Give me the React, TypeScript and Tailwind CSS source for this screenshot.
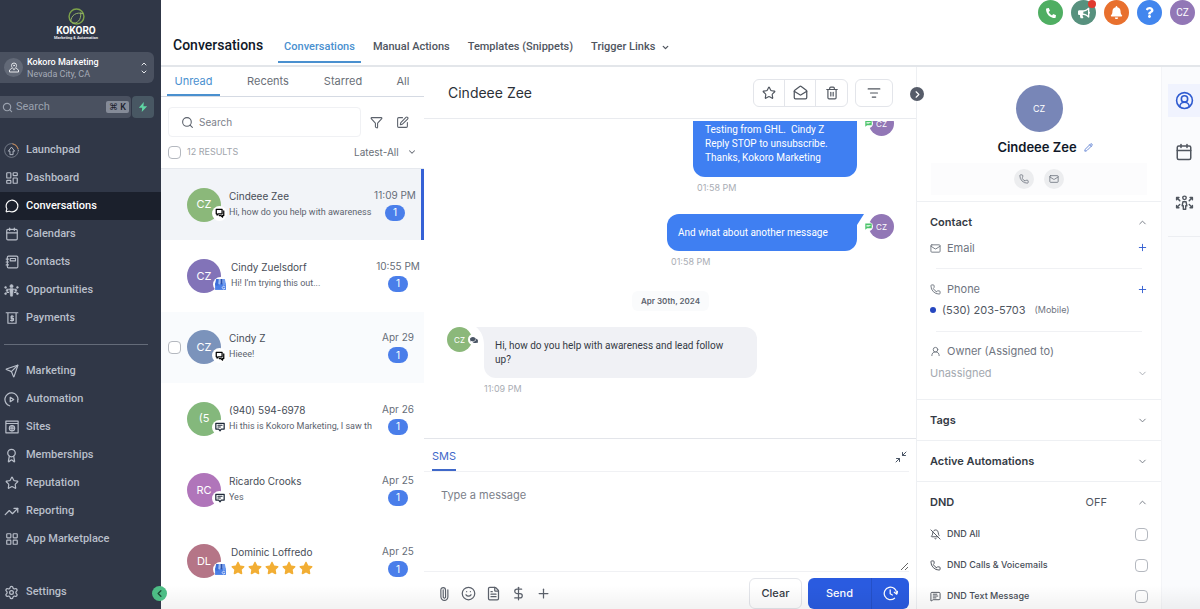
import type { ReactNode } from "react";
import {
  Award,
  BellOff,
  Calendar,
  ChevronDown,
  ChevronLeft,
  ChevronRight,
  ChevronUp,
  CircleUserRound,
  DollarSign,
  FileText,
  Funnel,
  LayoutDashboard,
  LayoutGrid,
  ListFilter,
  Mail,
  MailOpen,
  MessageCircle,
  MessageSquareText,
  Paperclip,
  Pencil,
  Phone,
  Plus,
  Search,
  Send,
  Settings,
  Smile,
  SquarePen,
  Star,
  Trash2,
  TrendingUp,
  UserRound,
} from "lucide-react";
import { FaBell, FaBullhorn, FaComments, FaPhoneAlt, FaQuestion, FaStar } from "react-icons/fa";

const stroke = {
  fill: "none",
  stroke: "currentColor",
  strokeWidth: 2,
  strokeLinecap: "round",
  strokeLinejoin: "round",
} as const;

function LaunchpadIcon() {
  return (
    <svg viewBox="0 0 24 24" className="size-[15px]" {...stroke} strokeWidth={1.5}>
      <circle cx="12" cy="12" r="11" opacity="0.5" />
      <path d="M14 1.2A11 11 0 0 1 22.6 9" stroke="#d08a4e" />
      <path d="M9.500 18v-5H7L12 6.500l5 6.500h-2.500v5z" />
    </svg>
  );
}

function ContactsIcon() {
  return (
    <svg viewBox="0 0 24 24" className="size-[14px]" {...stroke}>
      <rect x="4" y="2" width="18" height="20" rx="2" />
      <rect x="9" y="6" width="9" height="4" />
      <path d="M2 7h4M2 12h4M2 17h4" />
    </svg>
  );
}

function OpportunitiesIcon() {
  return (
    <svg viewBox="0 0 24 24" className="size-[15px]" fill="currentColor" stroke="currentColor">
      <circle cx="12" cy="5" r="2.500" />
      <path d="M9.500 9h5v5l-1 7h-3l-1-7z" />
      <path d="M4 10h16M4 15h4M16 15h4" strokeWidth="1.800" />
      <circle cx="2.500" cy="7" r="1.500" />
      <circle cx="21.500" cy="7" r="1.500" />
      <circle cx="5" cy="12" r="1.500" />
      <circle cx="19" cy="12" r="1.500" />
      <circle cx="2.500" cy="17" r="1.500" />
      <circle cx="21.500" cy="17" r="1.500" />
    </svg>
  );
}

function PaymentsIcon() {
  return (
    <svg viewBox="0 0 24 24" className="size-[14px]" {...stroke}>
      <path d="M2 3h20M5 3v18h14V3" />
      <path d="M14.500 9h-4v3.500h4V16h-5M12 7.500v10" />
    </svg>
  );
}

function AutomationIcon() {
  return (
    <svg viewBox="0 0 24 24" className="size-[15px]" {...stroke}>
      <path d="M22.500 12A10.500 10.500 0 1 0 9 22M22 16v-4" />
      <path d="M10 8.500v7l5.500-3.500z" />
    </svg>
  );
}

function SitesIcon() {
  return (
    <svg viewBox="0 0 24 24" className="size-[14px]" {...stroke}>
      <path d="M1.500 2h21v20h-21zM1.500 6h21" />
      <circle cx="12" cy="14" r="4.500" />
      <path d="M7.500 14h9M12 9.500v9" />
    </svg>
  );
}

function PersonArrowsIcon() {
  return (
    <svg viewBox="0 0 24 20" className="h-4 w-[19px]" {...stroke} strokeWidth={1.800}>
      <circle cx="12" cy="3.500" r="2.200" />
      <path d="M10 8.500h4l1 5h-1.500V18h-3v-4.500H9z" />
      <path d="M2 6V3h3M2 3l4 4M22 6V3h-3M22 3l-4 4M2 13v3h3M2 16l4-4M22 13v3h-3M22 16l-4-4" />
    </svg>
  );
}

function ScheduleIcon() {
  return (
    <svg viewBox="0 0 24 24" className="size-[15px]" {...stroke}>
      <path d="M18.500 19.500A10 10 0 1 1 22 12" />
      <path d="M11.500 6v6.500l3.500 2M18 10l4 3 1.500-4.500" />
    </svg>
  );
}

function CollapseIcon() {
  return (
    <svg viewBox="0 0 24 24" className="size-3" {...stroke}>
      <path d="M22 2l-7 7M15 3v6h6M2 22l7-7M9 21v-6H3" />
    </svg>
  );
}

function ChatBubblesIcon() {
  return (
    <svg viewBox="0 0 24 24" className="size-[10px] text-black" {...stroke} strokeWidth={3}>
      <path d="M3 3h14v11H8l-3 3v-3H3z" />
      <path d="M21 7v11h-3v4l-4-4h-4" />
    </svg>
  );
}

function SmsIcon() {
  return (
    <svg viewBox="0 0 24 24" className="size-[10px] text-gray-800" {...stroke} strokeWidth={3}>
      <path d="M2 3h20v14h-7l-3 4-3-4H2z" />
      <path d="M7 8h10M7 12h6" strokeWidth={2.500} />
    </svg>
  );
}

function StoreIcon() {
  return (
    <svg viewBox="0 0 24 24" className="size-[13px]">
      <path d="M2 10h20v12H2z" fill="#4a7fe6" />
      <path d="M4 2h5v9a3.500 3.500 0 0 1-7 0z" fill="#3b6fd8" />
      <path d="M9 2h3v9a3 3 0 0 1-4 0z" fill="#9dbdf5" />
      <path d="M12 2h4v9a3 3 0 0 1-4 0z" fill="#2850b0" />
      <path d="M16 2h4l2 9a3 3 0 0 1-6 0z" fill="#6f9cf0" />
      <path d="M20 16.500a2.500 2.500 0 1 0 0 2.500h-2" fill="none" stroke="#fff" strokeWidth="1.300" />
    </svg>
  );
}

type NavItem = { label: string; icon: ReactNode; active?: boolean };

const mainNav: NavItem[] = [
  { label: "Launchpad", icon: <LaunchpadIcon /> },
  { label: "Dashboard", icon: <LayoutDashboard size={14} /> },
  { label: "Conversations", icon: <MessageCircle size={14} />, active: true },
  { label: "Calendars", icon: <Calendar size={14} /> },
  { label: "Contacts", icon: <ContactsIcon /> },
  { label: "Opportunities", icon: <OpportunitiesIcon /> },
  { label: "Payments", icon: <PaymentsIcon /> },
];

const toolsNav: NavItem[] = [
  { label: "Marketing", icon: <Send size={14} /> },
  { label: "Automation", icon: <AutomationIcon /> },
  { label: "Sites", icon: <SitesIcon /> },
  { label: "Memberships", icon: <Award size={15} /> },
  { label: "Reputation", icon: <Star size={14} /> },
  { label: "Reporting", icon: <TrendingUp size={15} /> },
  { label: "App Marketplace", icon: <LayoutGrid size={14} /> },
];

const conversations = [
  { name: "Cindeee Zee", initials: "CZ", color: "bg-[#8bb87a]", channel: "chat", text: "Hi, how do you help with awareness", time: "11:09 PM", state: "selected" },
  { name: "Cindy Zuelsdorf", initials: "CZ", color: "bg-[#8273b8]", channel: "google", text: "Hi! I’m trying this out...", time: "10:55 PM", state: "" },
  { name: "Cindy Z", initials: "CZ", color: "bg-[#7b93bb]", channel: "chat", text: "Hieee!", time: "Apr 29", state: "hover" },
  { name: "(940) 594-6978", initials: "(5", color: "bg-[#84b87c]", channel: "sms", text: "Hi this is Kokoro Marketing, I saw th", time: "Apr 26", state: "" },
  { name: "Ricardo Crooks", initials: "RC", color: "bg-[#b075ba]", channel: "sms", text: "Yes", time: "Apr 25", state: "" },
  { name: "Dominic Loffredo", initials: "DL", color: "bg-[#b57587]", channel: "google", text: "", time: "Apr 25", state: "" },
];

function NavLink({ item }: { item: NavItem }) {
  return (
    <a
      href="#"
      className={`flex h-7 items-center gap-[7px] pl-1 text-[11px] font-medium ${
        item.active ? "bg-[#1b202c] text-white" : "text-[#b9bfca]"
      }`}
    >
      <span className="flex w-[15px] justify-center">{item.icon}</span>
      {item.label}
    </a>
  );
}

function Sidebar() {
  return (
    <aside className="relative z-10 flex w-[161px] shrink-0 flex-col bg-[#303747] font-[Roboto,sans-serif]">
      <div className="flex h-[52px] flex-col items-center pt-2 pr-[9px]">
        <svg viewBox="0 0 24 24" className="size-[17px]" fill="none" strokeLinecap="round">
          <circle cx="12" cy="12" r="10.500" stroke="#7da34a" strokeWidth="2" />
          <path d="M4 19C4 10 12 5 21 8M6 21c7 2 13-4 12-14" stroke="#9dbb6a" strokeWidth="1.300" />
        </svg>
        <p className="text-[10px] leading-[11px] font-bold text-white">KOKORO</p>
        <p className="text-[4px] leading-[4px] font-bold text-gray-200">Marketing &amp; Automation</p>
      </div>

      <button className="mr-[7px] flex h-[31px] items-center rounded-r-md bg-[#4a5160] pr-[6px] pl-1 text-left">
        <span className="flex size-[19px] items-center justify-center rounded-full bg-[#626977] text-gray-200">
          <svg viewBox="0 0 24 24" className="size-3" {...stroke}>
            <path d="M12 15c-3-3-5-5-5-8a5 5 0 0 1 10 0c0 3-2 5-5 8z" />
            <circle cx="12" cy="7" r="1" />
            <path d="M7 13l-4 3v4h18v-4l-4-3" />
          </svg>
        </span>
        <span className="ml-1 flex-1 text-[9px] leading-3 font-medium text-white">
          Kokoro Marketing
          <span className="block font-normal text-[#a4aab6]">Nevada City, CA</span>
        </span>
        <span className="flex flex-col text-gray-200">
          <ChevronUp size={8} strokeWidth={3} />
          <ChevronDown size={8} strokeWidth={3} />
        </span>
      </button>

      <div className="mt-[13px] mr-[7px] flex h-[22px] gap-px">
        <label className="flex min-w-0 flex-1 items-center gap-[3px] rounded-r-sm bg-[#4a5160] pr-[2px] pl-[2px] text-[#9aa1ae]">
          <Search size={11} strokeWidth={2.500} className="shrink-0" />
          <input
            aria-label="Search menu"
            placeholder="Search"
            className="min-w-0 flex-1 text-[11px] outline-none placeholder:text-[#9aa1ae]"
          />
          <kbd className="rounded-xs bg-[#858b98] px-[3px] font-[Roboto,'DejaVu_Sans',sans-serif] text-[9px] leading-3 font-medium text-[#1b202c]">
            ⌘ K
          </kbd>
        </label>
        <button aria-label="Quick actions" className="flex w-[22px] items-center justify-center rounded-sm bg-[#485763]">
          <svg viewBox="0 0 24 24" className="size-[10px]" fill="#5fd6a4">
            <path d="M14 0L2 14h8l-1 10 13-14h-9z" />
          </svg>
        </button>
      </div>

      <nav className="mt-[18px] flex-1">
        {mainNav.map((item) => (
          <NavLink key={item.label} item={item} />
        ))}
        <hr className="mt-3 mr-[13px] mb-3 ml-1 border-[#646b79]" />
        {toolsNav.map((item) => (
          <NavLink key={item.label} item={item} />
        ))}
      </nav>
      <div className="pb-[3px]">
        <NavLink item={{ label: "Settings", icon: <Settings size={15} /> }} />
      </div>
      <button
        aria-label="Collapse sidebar"
        className="absolute -right-[6px] bottom-2 flex size-[15px] items-center justify-center rounded-full bg-[#4dbd85] text-[#1d4a35]"
      >
        <ChevronLeft size={11} strokeWidth={3} />
      </button>
    </aside>
  );
}

function Header() {
  const circle = "relative flex size-[25px] items-center justify-center rounded-full text-white";
  const tab = "flex h-[34px] items-center pt-[2px]";
  return (
    <header className="flex h-[67px] shrink-0 items-end justify-between border-b-2 border-[#e3e6ea] font-[Roboto,sans-serif]">
      <div className="flex items-end pb-[2px] pl-3">
        <h1 className="flex h-[36px] items-center text-[14px] font-medium text-gray-900">Conversations</h1>
        <nav className="ml-[15px] flex gap-[18px] text-[11px] font-medium text-[#50565f]">
          <a href="#" className="-mr-[6px] flex h-[34px] items-center border-b-2 border-[#4a90cf] px-[6px] pt-1 text-[#4a90cf]">
            Conversations
          </a>
          <a href="#" className={tab}>Manual Actions</a>
          <a href="#" className={tab}>Templates (Snippets)</a>
          <button className={`${tab} gap-[6px]`}>
            Trigger Links
            <ChevronDown size={9} strokeWidth={3.500} />
          </button>
        </nav>
      </div>
      <div className="flex gap-2 self-start pr-[5px]">
        <button aria-label="Call" className={`${circle} bg-[#4fae62]`}><FaPhoneAlt size={10} /></button>
        <button aria-label="Announcements" className={`${circle} bg-[#57917e]`}>
          <FaBullhorn size={12} />
          <span className="absolute top-0 right-0 size-[8px] rounded-full bg-[#e03a2f]" />
        </button>
        <button aria-label="Notifications" className={`${circle} bg-[#e8702e]`}><FaBell size={13} /></button>
        <button aria-label="Help" className={`${circle} bg-[#4286ee]`}><FaQuestion size={11} /></button>
        <button aria-label="Account" className={`${circle} bg-[#9277b6] text-[10px]`}>CZ</button>
      </div>
    </header>
  );
}

function Conversation({ item }: { item: (typeof conversations)[number] }) {
  const selected = item.state === "selected";
  const google = item.channel === "google";
  return (
    <li
      className={`flex min-w-0 items-center pr-1 pl-[7px] ${
        selected ? "border-r-3 border-[#3561d6] bg-[#f2f4f8]" : item.state === "hover" ? "bg-[#f9fbfd]" : ""
      }`}
    >
      <span className="flex w-[19px] shrink-0">
        {item.state === "hover" && <CheckBox label={`Select ${item.name}`} />}
      </span>
      <span className={`relative flex size-[34px] shrink-0 items-center justify-center rounded-full text-[11px] text-white ${item.color}`}>
        {item.initials}
        <span
          className={`absolute top-[18px] flex size-[15px] items-center justify-center rounded-full bg-white ${
            google ? "-right-[7px]" : "-right-[6px]"
          }`}
        >
          {item.channel === "chat" && <ChatBubblesIcon />}
          {item.channel === "sms" && <SmsIcon />}
          {google && <StoreIcon />}
        </span>
      </span>
      <div className={`min-w-0 flex-1 pb-[2px] ${google ? "pl-[10px]" : "pl-2"}`}>
        <p className="text-[10px] leading-4 text-[#474d57]">{item.name}</p>
        {item.text ? (
          <p className="overflow-hidden font-[Roboto,sans-serif] text-[9px] leading-4 whitespace-nowrap text-[#5c636e]">
            {item.text}
          </p>
        ) : (
          <p className="flex h-4 items-center gap-[3px] text-[#f2ae34]" aria-label="5 stars">
            {[1, 2, 3, 4, 5].map((n) => (
              <FaStar key={n} size={14} />
            ))}
          </p>
        )}
      </div>
      <div className="flex w-[44px] shrink-0 flex-col items-center gap-[2px] pb-[2px]">
        <time className="text-[10px] leading-4 whitespace-nowrap text-[#666d78]">{item.time}</time>
        <span className="flex h-4 w-5 items-center justify-center rounded-full bg-[#4a7eea] text-[10px] text-white">1</span>
      </div>
    </li>
  );
}

function CheckBox({ label }: { label: string }) {
  return (
    <input
      type="checkbox"
      aria-label={label}
      className="size-[13px] shrink-0 appearance-none rounded-[4px] border border-[#b4b8bf] bg-white"
    />
  );
}

function ConversationList() {
  const tab = "flex shrink-0 items-center justify-center";
  return (
    <section className="flex w-[263px] shrink-0 flex-col overflow-hidden">
      <nav className="flex h-[30px] shrink-0 border-b border-[#d5dae3] pl-[6px] text-[11px] text-[#6a6f78]">
        <a href="#" className={`${tab} w-[53px] border-b-2 border-[#4a90cf] pt-[2px] text-[#4a90cf]`}>Unread</a>
        <a href="#" className={`${tab} w-24`}>Recents</a>
        <a href="#" className={`${tab} w-[54px]`}>Starred</a>
        <a href="#" className={`${tab} w-[54px] pl-3`}>All</a>
      </nav>

      <div className="flex items-center pt-[10px] pl-[7px] text-[#5c626c]">
        <label className="flex h-[30px] w-[193px] items-center gap-[5px] rounded-sm border border-[#f0f1f4] pl-3">
          <Search size={13} className="shrink-0" />
          <input
            aria-label="Search conversations"
            placeholder="Search"
            className="min-w-0 flex-1 text-[10px] outline-none placeholder:text-[#7c818a]"
          />
        </label>
        <button aria-label="Filter" className="ml-[9px]"><Funnel size={13} /></button>
        <button aria-label="New conversation" className="ml-[13px]"><SquarePen size={13} /></button>
      </div>

      <div className="mb-px flex h-[30px] items-center justify-between pr-[7px] pl-[7px] text-[9px]">
        <label className="flex items-center gap-[6px] text-[#a0a4ab]">
          <CheckBox label="Select all" />
          12 RESULTS
        </label>
        <span className="flex items-center">
          <select aria-label="Sort" className="appearance-none pr-2 text-[10px] text-[#6a6f78] outline-none">
            <option>Latest-All</option>
          </select>
          <ChevronDown size={10} strokeWidth={2.500} className="text-[#6a6f78]" />
        </span>
      </div>

      <ul className="grid h-[429px] shrink-0 grid-cols-1 grid-rows-6 border-t border-[#e6e9ee]">
        {conversations.map((item) => (
          <Conversation key={item.name} item={item} />
        ))}
      </ul>
    </section>
  );
}

function OutgoingAvatar() {
  return (
    <span className="relative ml-3 flex size-[25px] shrink-0 items-center justify-center rounded-full bg-[#9277b6] text-[8px] text-white">
      CZ
      <span className="absolute top-2 -left-[5px] flex size-[9px] items-center justify-center rounded-full bg-white text-[#4cc46b]">
        <svg viewBox="0 0 24 24" className="size-[7px]" fill="currentColor">
          <path d="M1 2h22v16H7l-6 5zM5 7v2h14V7zM5 12v2h10v-2z" fillRule="evenodd" />
        </svg>
      </span>
    </span>
  );
}

function Messages() {
  const stamp = "block text-[9px] leading-[22px] text-[#a9adb4]";
  const bubble = "relative rounded-xl font-[Roboto,sans-serif] text-[10px] leading-[14px]";
  return (
    <div className="mt-[2px] flex min-h-0 flex-1 flex-col justify-end overflow-hidden pr-[22px] pb-[38px] pl-[23px]">
      <div className="flex items-start justify-end">
        <div>
          <p className={`${bubble} w-[164px] bg-[#3f7ff2] px-3 pt-6 pb-3 whitespace-pre text-white`}>
            {"Testing from GHL.  Cindy Z\nReply STOP to unsubscribe.\nThanks, Kokoro Marketing"}
          </p>
          <time className={`ml-1 ${stamp}`}>01:58 PM</time>
        </div>
        <span className="mt-3">
          <OutgoingAvatar />
        </span>
      </div>

      <div className="mt-[15px] flex items-start justify-end">
        <div>
          <div className={`${bubble} w-[190px] rounded-tr-none bg-[#3f7ff2] px-[11px] pt-3 pb-[11px] text-white`}>
            And what about another message
            <svg viewBox="0 0 7 12" className="absolute top-0 left-full h-3 w-[7px]" fill="#3f7ff2">
              <path d="M0 0h7L0 11z" />
            </svg>
          </div>
          <time className={`ml-1 ${stamp}`}>01:58 PM</time>
        </div>
        <OutgoingAvatar />
      </div>

      <p className="mt-[18px] self-center rounded-md bg-[#fafbfc] px-[9px] text-[8px] leading-5 font-semibold text-[#5c636e]">
        Apr 30th, 2024
      </p>

      <div className="mt-4 flex items-start">
        <span className="relative mr-3 flex size-[25px] shrink-0 items-center justify-center rounded-full bg-[#8bb87a] text-[8px] text-white">
          CZ
          <span className="absolute top-[7px] -right-[7px] flex size-[11px] items-center justify-center rounded-full bg-white text-gray-600">
            <FaComments size={8} />
          </span>
        </span>
        <div>
          <div className={`${bubble} w-[273px] rounded-tl-none bg-[#f0f1f5] pt-3 pr-6 pb-[11px] pl-[11px] text-[#343a44]`}>
            Hi, how do you help with awareness and lead follow up?
            <svg viewBox="0 0 8 18" className="absolute top-0 right-full h-[18px] w-2" fill="#f0f1f5">
              <path d="M0 0h8v18C8 10 5 4 0 0z" />
            </svg>
          </div>
          <time className={stamp}>11:09 PM</time>
        </div>
      </div>
    </div>
  );
}

function Composer() {
  return (
    <div className="mr-[7px] shrink-0">
      <div className="-mr-[7px] border-t border-[#e3e5ea]" />
      <div className="flex h-[33px] items-center justify-between border-b border-[#f0f1f4] pr-[2px] pl-2">
        <button className="flex h-8 items-center self-start border-b-2 border-[#3f68c9] pt-1 text-[11px] text-[#3f68c9]">SMS</button>
        <button aria-label="Minimize composer" className="mt-1 text-gray-600"><CollapseIcon /></button>
      </div>
      <textarea
        aria-label="Message"
        placeholder="Type a message"
        className="block h-[99px] w-full resize-y px-[17px] pt-[15px] text-[11px] leading-4 outline-none placeholder:text-[#7c818a]"
      />
      <div className="flex h-[38px] items-start border-t border-[#f0f1f4] pt-[6px] pl-[13px] text-[#5c626c]">
        <div className="flex h-[31px] flex-1 items-center gap-[10px]">
          <button aria-label="Attach file"><Paperclip size={14} className="-rotate-45" /></button>
          <button aria-label="Emoji"><Smile size={15} /></button>
          <button aria-label="Template"><FileText size={15} /></button>
          <button aria-label="Request payment"><DollarSign size={15} /></button>
          <button aria-label="More"><Plus size={15} /></button>
        </div>
        <button className="h-[31px] w-[53px] rounded-md border border-[#e3e5ea] bg-white text-[11px] font-medium text-[#343a44]">
          Clear
        </button>
        <div className="ml-[6px] flex h-[31px] overflow-hidden rounded-md bg-[#2a5be0] text-white">
          <button className="w-16 border-r border-[#2450c8] text-[11px] font-medium">Send</button>
          <button aria-label="Schedule send" className="flex w-[37px] items-center justify-center">
            <ScheduleIcon />
          </button>
        </div>
      </div>
    </div>
  );
}

function Chat() {
  const tool = "flex h-full w-[31px] items-center justify-center";
  return (
    <main className="relative flex min-w-0 flex-1 flex-col">
      <div className="flex h-[52px] shrink-0 items-center border-b border-[#e9ebef] pr-[23px] pl-6 text-[#50565f]">
        <h2 className="flex-1 text-[14px] text-[#2b3038]">Cindeee Zee</h2>
        <div className="flex h-7 divide-x divide-[#e3e5ea] rounded-md border border-[#e3e5ea]">
          <button aria-label="Star" className={tool}><Star size={14} /></button>
          <button aria-label="Mark as read" className={tool}><MailOpen size={15} /></button>
          <button aria-label="Delete" className={tool}><Trash2 size={14} /></button>
        </div>
        <button aria-label="Filter messages" className="ml-[7px] flex h-7 w-[38px] items-center justify-center rounded-md border border-[#e3e5ea]">
          <ListFilter size={14} />
        </button>
      </div>
      <button
        aria-label="Collapse details"
        className="absolute top-5 -right-2 z-10 flex size-[14px] items-center justify-center rounded-full bg-[#565c69] text-white"
      >
        <ChevronRight size={11} strokeWidth={2.500} />
      </button>
      <Messages />
      <Composer />
    </main>
  );
}

function PanelTitle({ title, open, note }: { title: string; open?: boolean; note?: string }) {
  return (
    <button className="flex h-10 w-full items-center text-[11px]">
      <span className="flex-1 text-left font-semibold text-[#343a44]">{title}</span>
      {note && <span className="mr-[30px] text-[#50565f]">{note}</span>}
      {open ? <ChevronUp size={11} /> : <ChevronDown size={11} />}
    </button>
  );
}

function Details() {
  const panel = "border-t border-[#eef0f3] px-[13px]";
  const field = "flex items-center gap-[6px]";
  const round = "flex size-5 items-center justify-center rounded-full bg-[#ecedef]";
  const dnd = [
    { label: "DND All", icon: <BellOff size={11} /> },
    { label: "DND Calls & Voicemails", icon: <Phone size={11} /> },
    { label: "DND Text Message", icon: <MessageSquareText size={11} /> },
  ];
  return (
    <aside className="flex w-[245px] shrink-0 flex-col overflow-hidden border-l border-[#eef0f3] text-[11px] text-[#6f757f]">
      <div className="flex shrink-0 flex-col items-center pt-[18px]">
        <span className="flex size-[47px] items-center justify-center rounded-full bg-[#7886b7] text-[9px] text-white">CZ</span>
        <div className="mt-[6px] flex items-center gap-[7px] pl-[12px]">
          <h3 className="text-[13px] leading-[18px] font-semibold text-gray-900">Cindeee Zee</h3>
          <button aria-label="Edit name" className="text-[#3f68c9]"><Pencil size={9} /></button>
        </div>
        <div className="mt-[7px] flex h-8 w-[216px] items-center justify-center gap-[10px] bg-[#fcfcfd]">
          <button aria-label="Call contact" className={round}><Phone size={10} /></button>
          <button aria-label="Email contact" className={round}><Mail size={10} /></button>
        </div>
      </div>

      <section className={`mt-[6px] shrink-0 ${panel}`}>
        <PanelTitle title="Contact" open />
        <div className="flex h-[26px] items-start justify-between">
          <span className={`h-3 ${field}`}><Mail size={11} />Email</span>
          <button aria-label="Add email" className="text-[#2f5bd0]"><Plus size={11} /></button>
        </div>
        <hr className="mx-[6px] border-[#f0f1f4]" />
        <div className="mt-[11px] flex h-[18px] items-center justify-between">
          <span className={field}><Phone size={11} />Phone</span>
          <button aria-label="Add phone" className="text-[#2f5bd0]"><Plus size={11} /></button>
        </div>
        <p className="mt-[3px] flex h-[18px] items-center text-[#50565f]">
          <span className="mr-[6px] size-[6px] rounded-full bg-[#2547c0]" />
          (530) 203-5703
          <span className="ml-[9px] text-[9px] text-[#6f757f]">(Mobile)</span>
        </p>
        <hr className="mx-[6px] mt-3 border-[#f0f1f4]" />
        <label htmlFor="owner" className={`mt-[10px] h-[18px] ${field}`}>
          <UserRound size={11} />
          Owner (Assigned to)
        </label>
        <div className="mt-1 mb-[17px] flex h-[18px] items-center text-[#a4a9b0]">
          <select id="owner" className="flex-1 appearance-none outline-none">
            <option>Unassigned</option>
          </select>
          <ChevronDown size={11} />
        </div>
      </section>
      <section className={`shrink-0 ${panel}`}>
        <PanelTitle title="Tags" />
      </section>
      <section className={`shrink-0 ${panel}`}>
        <PanelTitle title="Active Automations" />
      </section>
      <section className={`shrink-0 ${panel}`}>
        <PanelTitle title="DND" open note="OFF" />
        <div className="flex flex-col gap-[13px] pt-[3px]">
          {dnd.map((row) => (
            <label key={row.label} className="flex h-[18px] items-center gap-[6px] text-[9px] font-medium text-[#474d57]">
              {row.icon}
              <span className="flex-1">{row.label}</span>
              <CheckBox label={row.label} />
            </label>
          ))}
        </div>
      </section>
    </aside>
  );
}

function Rail() {
  return (
    <nav className="w-[39px] shrink-0 border-l border-[#f3f4f7] bg-[#fafbfd] pt-[17px] pl-[6px] text-[#50565f]">
      <div className="flex flex-col gap-[18px] border-b border-[#eceef2] pb-[17px]">
        <button aria-label="Contact details" className="flex h-[33px] items-center justify-center bg-[#f0f3fe] text-[#2f5bd0]">
          <CircleUserRound size={19} />
        </button>
        <button aria-label="Appointments" className="flex h-[33px] items-center justify-center">
          <Calendar size={18} />
        </button>
        <button aria-label="Opportunities" className="flex h-[33px] items-center justify-center">
          <PersonArrowsIcon />
        </button>
      </div>
    </nav>
  );
}

export default function App() {
  return (
    <div className="relative flex h-screen overflow-hidden bg-white font-[Inter,sans-serif]">
      <Sidebar />
      <div className="flex min-w-0 flex-1 flex-col">
        <Header />
        <div className="flex min-h-0 flex-1">
          <ConversationList />
          <Chat />
          <Details />
          <Rail />
        </div>
      </div>
      <div className="pointer-events-none absolute inset-x-0 bottom-0 h-6 bg-linear-to-t from-black/5 to-transparent" />
    </div>
  );
}
